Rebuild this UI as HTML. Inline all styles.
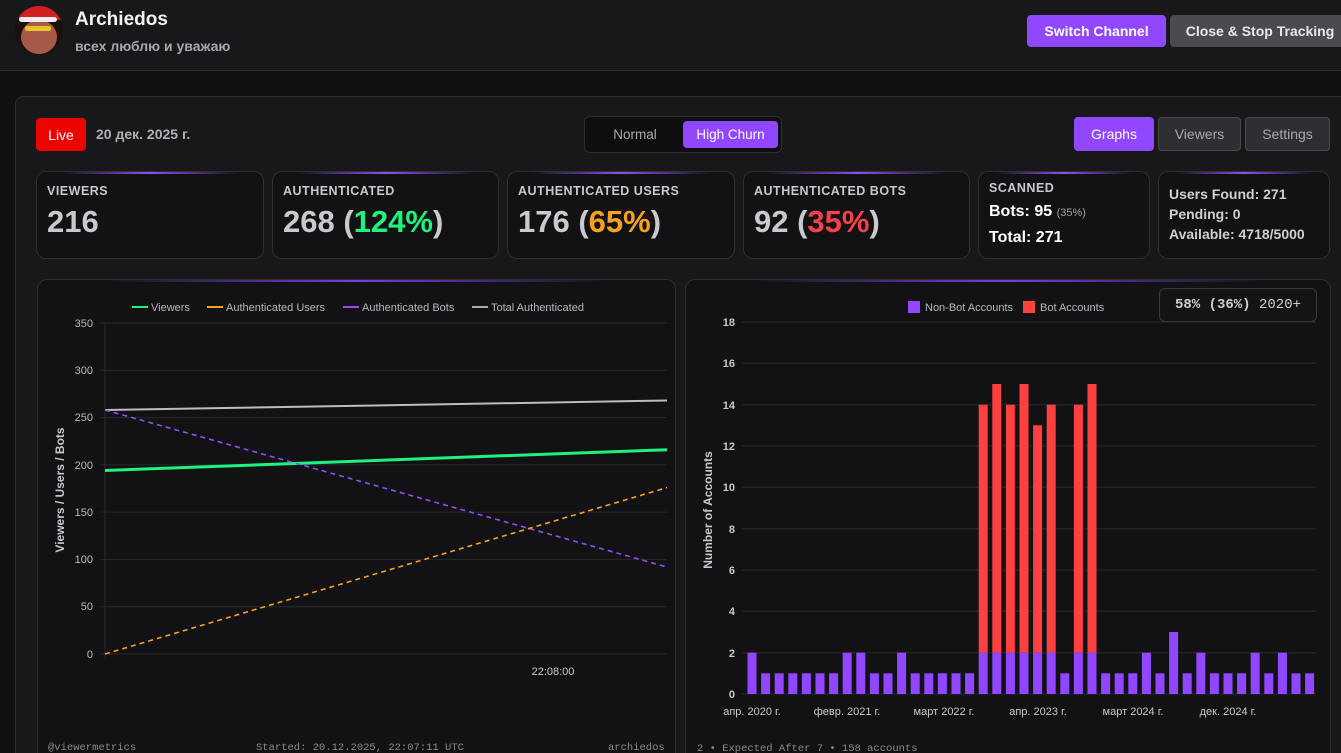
<!DOCTYPE html>
<html><head><meta charset="utf-8"><style>
*{box-sizing:border-box;margin:0;padding:0}
html,body{width:1341px;height:753px;overflow:hidden}
body{background:#101012;font-family:"Liberation Sans",sans-serif;position:relative;color:#fff}
.a{position:absolute}
.hdr{left:0;top:0;width:1341px;height:71px;background:#18181b;border-bottom:1px solid #2e2e33}
.btn{position:absolute;border-radius:4px;font-size:14px;display:flex;align-items:center;justify-content:center}
.panel{left:15px;top:96px;width:1340px;height:657px;background:#18181b;border:1px solid #2f2f35;border-bottom:none;border-radius:8px 8px 0 0}
.card{position:absolute;top:171px;height:88px;background:#121214;border:1px solid #2e2e34;border-radius:10px;overflow:hidden}
.card:before{content:"";position:absolute;left:10%;right:10%;top:0;height:2px;background:linear-gradient(90deg,transparent,#8e4ff5,transparent)}
.lbl{position:absolute;left:10px;top:12px;font-size:12.5px;font-weight:bold;color:#c8c8d0;letter-spacing:.5px}
.big{position:absolute;left:10px;top:32px;font-size:31px;font-weight:bold;color:#c9c9cf}
.cc{position:absolute;top:279px;height:474px;background:#121214;border:1px solid #2e2e34;border-bottom:none;border-radius:10px 10px 0 0;overflow:hidden}
.cc:before{content:"";position:absolute;left:10%;right:10%;top:0;height:2px;background:linear-gradient(90deg,transparent,#7a3fe0,transparent)}
</style></head><body>
<div class="a hdr"></div>
<div class="a" style="left:15px;top:6px;width:48px;height:48px;border-radius:50%;background:#1c0f0c;overflow:hidden">
<div class="a" style="left:6px;top:14px;width:36px;height:34px;border-radius:50%;background:#a85a48"></div>
<div class="a" style="left:4px;top:0;width:44px;height:14px;background:#d21f1f;border-radius:22px 22px 4px 4px"></div>
<div class="a" style="left:4px;top:11px;width:38px;height:5px;background:#eee;border-radius:3px"></div>
<div class="a" style="left:10px;top:20px;width:26px;height:5px;background:#e9c12a;border-radius:2px"></div>
</div>
<div class="a" style="left:75px;top:9px;font-size:19px;font-weight:bold;color:#f2f2f5">Archiedos</div>
<div class="a" style="left:75px;top:38px;font-size:14px;font-weight:bold;color:#a7a7b2">всех люблю и уважаю</div>
<div class="btn" style="left:1027px;top:15px;width:139px;height:32px;background:#9147ff;font-weight:bold;color:#fff">Switch Channel</div>
<div class="btn" style="left:1170px;top:15px;width:180px;height:32px;background:#4a4a50;font-weight:bold;color:#e8e8ea">Close &amp; Stop Tracking</div>

<div class="a panel"></div>
<div class="btn" style="left:36px;top:118px;width:50px;height:33px;background:#eb0400;color:#fff">Live</div>
<div class="a" style="left:96px;top:126px;font-size:14px;font-weight:bold;color:#b0b0b8">20 дек. 2025 г.</div>
<div class="a" style="left:584px;top:116px;width:198px;height:37px;background:#0e0e10;border:1px solid #2e2e33;border-radius:6px"></div>
<div class="btn" style="left:595px;top:120px;width:80px;height:28px;color:#a9a9b2;font-size:13.5px">Normal</div>
<div class="btn" style="left:683px;top:121px;width:95px;height:27px;background:#9147ff;color:#fff;font-size:13.5px">High Churn</div>
<div class="btn" style="left:1074px;top:117px;width:80px;height:34px;background:#9147ff;color:#fff">Graphs</div>
<div class="btn" style="left:1158px;top:117px;width:83px;height:34px;background:#2e2e33;border:1px solid #48484e;color:#a8a8b0">Viewers</div>
<div class="btn" style="left:1245px;top:117px;width:85px;height:34px;background:#2e2e33;border:1px solid #48484e;color:#a8a8b0">Settings</div>

<div class="card" style="left:36px;width:228px"><div class="lbl">VIEWERS</div><div class="big">216</div></div>
<div class="card" style="left:272px;width:227px"><div class="lbl">AUTHENTICATED</div><div class="big">268 (<span style="color:#1ef27f">124%</span>)</div></div>
<div class="card" style="left:507px;width:228px"><div class="lbl">AUTHENTICATED USERS</div><div class="big">176 (<span style="color:#f9a11b">65%</span>)</div></div>
<div class="card" style="left:743px;width:227px"><div class="lbl">AUTHENTICATED BOTS</div><div class="big">92 (<span style="color:#f5414a">35%</span>)</div></div>
<div class="card" style="left:978px;width:172px"><div class="lbl" style="top:9px">SCANNED</div>
<div class="a" style="left:10px;top:31px;font-size:16px;font-weight:bold">Bots: 95 <span style="font-size:11px;color:#a0a0a8;font-weight:normal">(35%)</span></div>
<div class="a" style="left:10px;top:57px;font-size:16px;font-weight:bold">Total: 271</div></div>
<div class="card" style="left:1158px;width:172px"><div class="a" style="left:10px;top:12px;font-size:14px;font-weight:bold;color:#cfcfd4;line-height:20px">Users Found: 271<br>Pending: 0<br>Available: 4718/5000</div></div>

<div class="cc" style="left:37px;width:639px"></div>
<div class="cc" style="left:685px;width:646px"></div>
<div class="a" style="left:1159px;top:288px;width:158px;height:34px;border:1px solid #3a3a40;border-radius:6px;background:#141416;font-family:'Liberation Mono',monospace;font-size:14px;color:#cfcfd4;display:flex;align-items:center;justify-content:center"><b>58% (36%)</b>&nbsp;2020+</div>

<svg class="a" style="left:0;top:0" width="1341" height="753" font-family="Liberation Sans,sans-serif">
<g stroke="#2a2a2e" stroke-width="1">
<line x1="100" x2="667" y1="323" y2="323"/><line x1="100" x2="667" y1="370.3" y2="370.3"/><line x1="100" x2="667" y1="417.6" y2="417.6"/><line x1="100" x2="667" y1="464.9" y2="464.9"/><line x1="100" x2="667" y1="512.1" y2="512.1"/><line x1="100" x2="667" y1="559.4" y2="559.4"/><line x1="100" x2="667" y1="606.7" y2="606.7"/><line x1="100" x2="667" y1="654" y2="654"/>
<line x1="105" x2="105" y1="323" y2="659"/>
</g>
<g fill="#b8b8c0" font-size="11" text-anchor="end">
<text x="93" y="327">350</text><text x="93" y="374">300</text><text x="93" y="421">250</text><text x="93" y="469">200</text><text x="93" y="516">150</text><text x="93" y="563">100</text><text x="93" y="610">50</text><text x="93" y="658">0</text>
</g>
<text x="553" y="675" fill="#c8c8d0" font-size="11" text-anchor="middle">22:08:00</text>
<text transform="translate(64,490) rotate(-90)" fill="#c8c8d0" font-size="12" font-weight="bold" text-anchor="middle">Viewers / Users / Bots</text>
<g font-size="11" fill="#b8b8c0">
<rect x="132" y="306" width="16" height="2" fill="#1ef27f"/><text x="151" y="311">Viewers</text>
<rect x="207" y="306" width="16" height="2" fill="#f9a11b"/><text x="226" y="311">Authenticated Users</text>
<rect x="343" y="306" width="16" height="2" fill="#8e4ff5"/><text x="362" y="311">Authenticated Bots</text>
<rect x="472" y="306" width="16" height="2" fill="#aaa"/><text x="491" y="311">Total Authenticated</text>
</g>
<line x1="105" y1="410" x2="667" y2="400.5" stroke="#bdbdc2" stroke-width="2"/>
<line x1="105" y1="470.5" x2="667" y2="449.7" stroke="#1ef27f" stroke-width="3"/>
<line x1="105" y1="410" x2="667" y2="567" stroke="#8e4ff5" stroke-width="1.6" stroke-dasharray="5,4"/>
<line x1="105" y1="654" x2="667" y2="487.6" stroke="#f9a11b" stroke-width="1.6" stroke-dasharray="5,4"/>
<g font-family="Liberation Mono,monospace" font-size="10.5" fill="#8a8a92">
<text x="48" y="750">@viewermetrics</text><text x="256" y="750">Started: 20.12.2025, 22:07:11 UTC</text><text x="608" y="750">archiedos</text>
<text x="697" y="751">2 • Expected After 7 • 158 accounts</text></g>

<g stroke="#2a2a2e">
<line x1="742" x2="1316" y1="322" y2="322"/><line x1="742" x2="1316" y1="363.3" y2="363.3"/><line x1="742" x2="1316" y1="404.7" y2="404.7"/><line x1="742" x2="1316" y1="446" y2="446"/><line x1="742" x2="1316" y1="487.3" y2="487.3"/><line x1="742" x2="1316" y1="528.7" y2="528.7"/><line x1="742" x2="1316" y1="570" y2="570"/><line x1="742" x2="1316" y1="611.3" y2="611.3"/><line x1="742" x2="1316" y1="652.7" y2="652.7"/><line x1="742" x2="1316" y1="694" y2="694"/>
</g>
<g fill="#c8c8d0" font-size="11" text-anchor="end" font-weight="bold">
<text x="735" y="326">18</text><text x="735" y="367">16</text><text x="735" y="409">14</text><text x="735" y="450">12</text><text x="735" y="491">10</text><text x="735" y="533">8</text><text x="735" y="574">6</text><text x="735" y="615">4</text><text x="735" y="657">2</text><text x="735" y="698">0</text>
</g>
<text transform="translate(712,510) rotate(-90)" fill="#c8c8d0" font-size="12" font-weight="bold" text-anchor="middle">Number of Accounts</text>
<g font-size="11" fill="#b8b8c0">
<rect x="908" y="301" width="12" height="12" fill="#9147ff"/><text x="925" y="311">Non-Bot Accounts</text>
<rect x="1023" y="301" width="12" height="12" fill="#ff4040"/><text x="1040" y="311">Bot Accounts</text>
</g>
<g fill="#c8c8d0" font-size="11" text-anchor="middle">
<text x="752" y="715">апр. 2020 г.</text><text x="847" y="715">февр. 2021 г.</text><text x="944" y="715">март 2022 г.</text><text x="1038" y="715">апр. 2023 г.</text><text x="1133" y="715">март 2024 г.</text><text x="1228" y="715">дек. 2024 г.</text>
</g>
<g fill="#ff4040">
<rect x="978.7" y="404.7" width="9" height="248"/><rect x="992.3" y="384" width="9" height="268.7"/><rect x="1005.9" y="404.7" width="9" height="248"/><rect x="1019.5" y="384" width="9" height="268.7"/><rect x="1033.1" y="425.3" width="9" height="227.3"/><rect x="1046.7" y="404.7" width="9" height="248"/><rect x="1073.9" y="404.7" width="9" height="248"/><rect x="1087.5" y="384" width="9" height="268.7"/>
</g>
<g fill="#9147ff">
<rect x="747.5" y="652.7" width="9" height="41.3"/><rect x="761.1" y="673.3" width="9" height="20.7"/><rect x="774.7" y="673.3" width="9" height="20.7"/><rect x="788.3" y="673.3" width="9" height="20.7"/><rect x="801.9" y="673.3" width="9" height="20.7"/><rect x="815.5" y="673.3" width="9" height="20.7"/><rect x="829.1" y="673.3" width="9" height="20.7"/><rect x="842.7" y="652.7" width="9" height="41.3"/><rect x="856.3" y="652.7" width="9" height="41.3"/><rect x="869.9" y="673.3" width="9" height="20.7"/><rect x="883.5" y="673.3" width="9" height="20.7"/><rect x="897.1" y="652.7" width="9" height="41.3"/><rect x="910.7" y="673.3" width="9" height="20.7"/><rect x="924.3" y="673.3" width="9" height="20.7"/><rect x="937.9" y="673.3" width="9" height="20.7"/><rect x="951.5" y="673.3" width="9" height="20.7"/><rect x="965.1" y="673.3" width="9" height="20.7"/>
<rect x="978.7" y="652.7" width="9" height="41.3"/><rect x="992.3" y="652.7" width="9" height="41.3"/><rect x="1005.9" y="652.7" width="9" height="41.3"/><rect x="1019.5" y="652.7" width="9" height="41.3"/><rect x="1033.1" y="652.7" width="9" height="41.3"/><rect x="1046.7" y="652.7" width="9" height="41.3"/><rect x="1060.3" y="673.3" width="9" height="20.7"/><rect x="1073.9" y="652.7" width="9" height="41.3"/><rect x="1087.5" y="652.7" width="9" height="41.3"/>
<rect x="1101.1" y="673.3" width="9" height="20.7"/><rect x="1114.7" y="673.3" width="9" height="20.7"/><rect x="1128.3" y="673.3" width="9" height="20.7"/><rect x="1141.9" y="652.7" width="9" height="41.3"/><rect x="1155.5" y="673.3" width="9" height="20.7"/><rect x="1169.1" y="632" width="9" height="62"/><rect x="1182.7" y="673.3" width="9" height="20.7"/><rect x="1196.3" y="652.7" width="9" height="41.3"/><rect x="1209.9" y="673.3" width="9" height="20.7"/><rect x="1223.5" y="673.3" width="9" height="20.7"/><rect x="1237.1" y="673.3" width="9" height="20.7"/><rect x="1250.7" y="652.7" width="9" height="41.3"/><rect x="1264.3" y="673.3" width="9" height="20.7"/><rect x="1277.9" y="652.7" width="9" height="41.3"/><rect x="1291.5" y="673.3" width="9" height="20.7"/><rect x="1305.1" y="673.3" width="9" height="20.7"/>
</g>
</svg>
</body></html>
